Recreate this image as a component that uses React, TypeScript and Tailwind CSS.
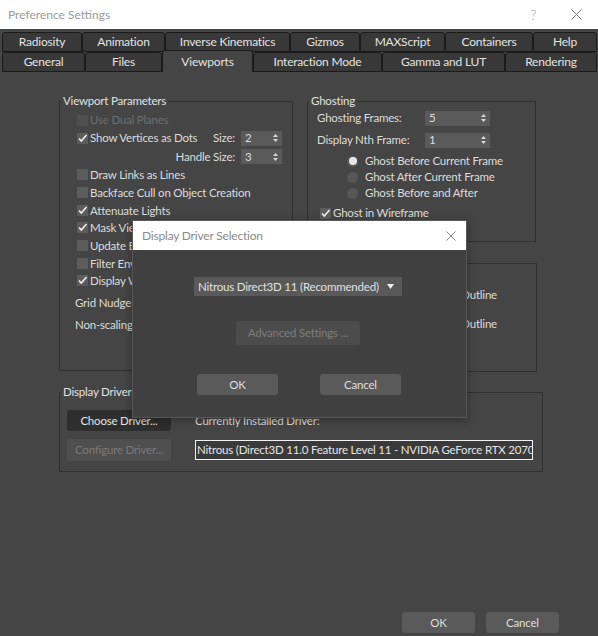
import React from 'react';

type Tab = { label: string; w: string; active?: boolean };

const topTabs: Tab[] = [
  { label: 'Radiosity', w: 'w-[80px]' },
  { label: 'Animation', w: 'w-[83px]' },
  { label: 'Inverse Kinematics', w: 'w-[125px]' },
  { label: 'Gizmos', w: 'w-[70px]' },
  { label: 'MAXScript', w: 'w-[85px]' },
  { label: 'Containers', w: 'w-[88px]' },
  { label: 'Help', w: 'w-[64px]' },
];

const bottomTabs: Tab[] = [
  { label: 'General', w: 'w-[83px]' },
  { label: 'Files', w: 'w-[77px]' },
  { label: 'Viewports', w: 'w-[91px]', active: true },
  { label: 'Interaction Mode', w: 'w-[129px]' },
  { label: 'Gamma and LUT', w: 'w-[123px]' },
  { label: 'Rendering', w: 'w-[92px]' },
];

function CloseIcon({ className = '' }: { className?: string }) {
  return (
    <svg viewBox="0 0 11 11" className={className} fill="none" stroke="#7a7a7a" strokeWidth="1">
      <path d="M0.5 0.5 L10.5 10.5 M10.5 0.5 L0.5 10.5" />
    </svg>
  );
}

function Checkbox({
  label,
  checked = false,
  disabled = false,
}: {
  label: string;
  checked?: boolean;
  disabled?: boolean;
}) {
  return (
    <span className="flex items-center gap-[2px] whitespace-nowrap">
      <span
        className={`flex h-[11px] w-[11px] shrink-0 items-center justify-center ${
          disabled ? 'bg-[#4f4f4f]' : 'bg-[#5c5c5c]'
        }`}
      >
        {checked ? (
          <svg viewBox="0 0 11 11" className="h-[11px] w-[11px]" fill="none" stroke="#f0f0f0" strokeWidth="1.6">
            <path d="M2 5.5 L4.3 8 L9.5 2" />
          </svg>
        ) : null}
      </span>
      <span className={disabled ? 'text-[#6e6e6e]' : 'text-[#dcdcdc]'}>{label}</span>
    </span>
  );
}

function Radio({ label, selected = false }: { label: string; selected?: boolean }) {
  return (
    <div className="flex h-[16px] items-center gap-[7px] pl-[30px]">
      <span className="flex h-[11px] w-[11px] items-center justify-center rounded-full bg-[#575757]">
        {selected ? <span className="h-[8px] w-[8px] rounded-full bg-[#e6e6e6]" /> : null}
      </span>
      <span>{label}</span>
    </div>
  );
}

function Spinner({ value, w }: { value: string; w: string }) {
  return (
    <div className={`flex h-[15px] shrink-0 items-center justify-between bg-[#5a5a5a] pl-[4px] pr-[4px] ${w}`}>
      <span className="leading-none">{value}</span>
      <svg viewBox="0 0 5 10" className="h-[10px] w-[5px]" fill="#d8d8d8">
        <path d="M0 4 L2.5 1 L5 4Z M0 6 L2.5 9 L5 6Z" />
      </svg>
    </div>
  );
}

function Group({
  title,
  className = '',
  children,
}: {
  title: string;
  className?: string;
  children: React.ReactNode;
}) {
  return (
    <fieldset className={`border border-[#303030] ${className}`}>
      <legend className="ml-[1px] px-[2px] leading-[16px] text-[#e0e0e0]">{title}</legend>
      {children}
    </fieldset>
  );
}

function TabRow({ tabs }: { tabs: Tab[] }) {
  return (
    <div className="flex items-end pl-[2px]">
      {tabs.map((t) => (
        <div
          key={t.label}
          className={`flex items-center justify-center rounded-t-[3px] border border-[#1b1b1b] text-[12px] text-[#e2e2e2] ${t.w} ${
            t.active ? 'relative z-10 -mt-[2px] h-[22px] border-b-0 bg-[#454545]' : 'h-[20px] bg-[#383838]'
          }`}
        >
          {t.label}
        </div>
      ))}
    </div>
  );
}

function Button({
  children,
  w,
  h = 'h-[21px]',
  tone = 'bg-[#5a5a5a] text-[#dedede]',
}: {
  children: React.ReactNode;
  w: string;
  h?: string;
  tone?: string;
}) {
  return (
    <div className={`flex items-center justify-center whitespace-nowrap rounded-[3px] ${w} ${h} ${tone}`}>
      {children}
    </div>
  );
}

function DriverDialog() {
  return (
    <div className="absolute left-[132px] top-[220px] flex h-[198px] w-[335px] flex-col border border-[#575757] bg-[#404040] shadow-[0_2px_8px_rgba(0,0,0,0.35)]">
      <div className="flex h-[29px] items-center justify-between bg-white pl-[9px] pr-[10px]">
        <span className="text-[12px] text-[#8a8a8a]">Display Driver Selection</span>
        <CloseIcon className="h-[10px] w-[10px]" />
      </div>
      <div className="ml-[61px] mt-[27px] flex h-[19px] w-[208px] items-center justify-between whitespace-nowrap bg-[#595959] pl-[4px] pr-[8px] text-[#e0e0e0]">
        <span>Nitrous Direct3D 11 (Recommended)</span>
        <svg viewBox="0 0 7 5" className="h-[5px] w-[7px]" fill="#eeeeee">
          <path d="M0 0 H7 L3.5 5Z" />
        </svg>
      </div>
      <div className="ml-[103px] mt-[25px]">
        <Button w="w-[124px]" h="h-[24px]" tone="bg-[#4c4c4c] text-[#7d7d7d]">
          Advanced Settings ...
        </Button>
      </div>
      <div className="ml-[64px] mt-[29px] flex gap-[42px]">
        <Button w="w-[81px]">OK</Button>
        <Button w="w-[81px]">Cancel</Button>
      </div>
    </div>
  );
}

export default function App() {
  return (
    <div className="relative flex h-[636px] w-[598px] flex-col overflow-hidden bg-[#454545] font-['Lato','Liberation_Sans',sans-serif] text-[11.5px] tracking-[-0.2px] text-[#dcdcdc]">
      {/* window title */}
      <div className="flex h-[29px] shrink-0 items-center bg-white pl-[8px] pr-[16px]">
        <span className="flex-1 text-[12px] tracking-normal text-[#9a9a9a]">Preference Settings</span>
        <span className="mr-[35px] text-[14px] font-light text-[#a0a0a0]">?</span>
        <CloseIcon className="h-[11px] w-[11px]" />
      </div>

      {/* tabs */}
      <div className="mt-[3px] flex flex-col">
        <TabRow tabs={topTabs} />
        <TabRow tabs={bottomTabs} />
      </div>

      {/* page body */}
      <div className="flex flex-1 flex-col pl-[59px] pt-[21px]">
        <div className="flex gap-[14px]">
          <Group title="Viewport Parameters" className="h-[278px] w-[234px]">
            <div className="flex flex-col pl-[17px] pr-[10px] pt-[2px]">
              <div className="flex h-[18px] items-center">
                <Checkbox label="Use Dual Planes" disabled />
              </div>
              <div className="flex h-[18px] items-center">
                <Checkbox label="Show Vertices as Dots" checked />
                <span className="ml-auto mr-[6px]">Size:</span>
                <Spinner value="2" w="w-[41px]" />
              </div>
              <div className="flex h-[19px] items-center justify-end">
                <span className="mr-[6px]">Handle Size:</span>
                <Spinner value="3" w="w-[41px]" />
              </div>
              <div className="flex h-[17.7px] items-center">
                <Checkbox label="Draw Links as Lines" />
              </div>
              <div className="flex h-[17.7px] items-center">
                <Checkbox label="Backface Cull on Object Creation" />
              </div>
              <div className="flex h-[17.7px] items-center">
                <Checkbox label="Attenuate Lights" checked />
              </div>
              <div className="flex h-[17.7px] items-center">
                <Checkbox label="Mask Viewport to Safe Region" checked />
              </div>
              <div className="flex h-[17.7px] items-center">
                <Checkbox label="Update Background Image" />
              </div>
              <div className="flex h-[17.7px] items-center">
                <Checkbox label="Filter Environment Backgrounds" />
              </div>
              <div className="flex h-[17.7px] items-center">
                <Checkbox label="Display World Axis" checked />
              </div>
              <div className="-ml-[2px] mt-[2px] flex h-[22px] items-center whitespace-nowrap">
                <span>Grid Nudge Distance:</span>
                <span className="ml-auto">
                  <Spinner value="1,0" w="w-[50px]" />
                </span>
              </div>
              <div className="-ml-[2px] flex h-[22px] items-center whitespace-nowrap">
                <span>Non-scaling Object Size:</span>
                <span className="ml-auto">
                  <Spinner value="1,0" w="w-[50px]" />
                </span>
              </div>
            </div>
          </Group>

          <div className="flex flex-col">
            <Group title="Ghosting" className="h-[149px] w-[229px]">
              <div className="flex flex-col pl-[9px]">
                <div className="flex h-[18px] items-center">
                  <span className="w-[108px]">Ghosting Frames:</span>
                  <Spinner value="5" w="w-[65px]" />
                </div>
                <div className="mt-[4px] flex h-[18px] items-center">
                  <span className="w-[108px]">Display Nth Frame:</span>
                  <Spinner value="1" w="w-[65px]" />
                </div>
                <div className="mt-[4px] flex flex-col">
                  <Radio label="Ghost Before Current Frame" selected />
                  <Radio label="Ghost After Current Frame" />
                  <Radio label="Ghost Before and After" />
                </div>
                <div className="ml-[3px] mt-[3px] flex h-[18px] items-center">
                  <Checkbox label="Ghost in Wireframe" checked />
                </div>
              </div>
            </Group>

            <Group title="Highlights" className="mt-[13px] h-[117px] w-[230px]">
              <div className="flex flex-col items-end pr-[39px]">
                <div className="mt-[15px] flex h-[18px] items-center">
                  <Checkbox label="Selection Outline" checked />
                </div>
                <div className="mt-[11px] flex h-[18px] items-center">
                  <Checkbox label="Preview Outline" checked />
                </div>
              </div>
            </Group>
          </div>
        </div>

        <Group title="Display Drivers" className="mt-[12px] h-[88px] w-[484px]">
          <div className="flex flex-col pl-[7px]">
            <div className="mt-[10px] flex items-center gap-[24px]">
              <Button w="w-[104px]" tone="bg-[#2e2e2e] text-[#e2e2e2]">
                Choose Driver...
              </Button>
              <span>Currently Installed Driver:</span>
            </div>
            <div className="mt-[8px] flex items-center gap-[24px]">
              <Button w="w-[104px]" h="h-[22px]" tone="bg-[#4f4f4f] text-[#7a7a7a]">
                Configure Driver...
              </Button>
              <div className="flex h-[20px] w-[338px] items-center overflow-hidden whitespace-nowrap border border-[#f2f2f2] bg-[#3a3a3a] pl-[1px] text-[#e4e4e4]">
                Nitrous (Direct3D 11.0 Feature Level 11 - NVIDIA GeForce RTX 2070 with Max-Q Design)
              </div>
            </div>
          </div>
        </Group>

        <div className="mt-auto flex justify-end gap-[11px] pb-[3px] pr-[39px]">
          <Button w="w-[73px]">OK</Button>
          <Button w="w-[73px]">Cancel</Button>
        </div>
      </div>

      <DriverDialog />
    </div>
  );
}
